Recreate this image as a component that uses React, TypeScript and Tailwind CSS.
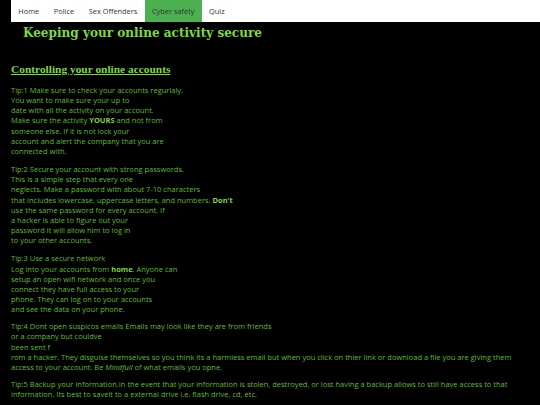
export default function App() {
  const navItems = ['Home', 'Police', 'Sex Offenders', 'Cyber safety', 'Quiz'];

  return (
    <div className="min-h-[405px] w-[540px] bg-black font-['Open_Sans',sans-serif] text-[7.5px] leading-[10.15px] text-[#5cbf2a]">
      {/* Nav */}
      <div className="pl-[11px]">
        <ul className="flex h-[22px] items-stretch bg-white text-[7.4px] text-[#333]">
          {navItems.map((item) => (
            <li
              key={item}
              className={`flex items-center px-[7.3px] ${item === 'Cyber safety' ? 'bg-[#4caf50]' : ''}`}
            >
              {item}
            </li>
          ))}
        </ul>
      </div>

      {/* Title */}
      <h1 className="pl-[23px] font-['DejaVu_Serif_Condensed','DejaVu_Serif',serif] text-[13.4px] font-bold leading-[20px] text-[#7ed93e]">
        Keeping your online activity secure
      </h1>

      <div className="px-[11px]">
        <h2 className="mt-[19px] font-['Liberation_Serif',serif] text-[11.4px] font-bold leading-[16px] text-[#7ed93e] underline">
          Controlling your online accounts
        </h2>

        <p className="mt-[8px]">
          Tip:1 Make sure to check your accounts regurlaly.
          <br />
          You want to make sure your up to
          <br />
          date with all the activity on your account.
          <br />
          Make sure the activity <b className="text-[#7ed93e]">YOURS</b> and not from
          <br />
          someone else. If it is not lock your
          <br />
          account and alert the company that you are
          <br />
          connected with.
        </p>

        <p className="mt-[8px]">
          Tip:2 Secure your account with strong passwords.
          <br />
          This is a simple step that every one
          <br />
          neglects. Make a password with about 7-10 characters
          <br />
          that includes lowercase, uppercase letters, and numbers. <b className="text-[#7ed93e]">Don't</b>
          <br />
          use the same password for every account. If
          <br />
          a hacker is able to figure out your
          <br />
          password it will allow him to log in
          <br />
          to your other accounts.
        </p>

        <p className="mt-[8px]">
          Tip:3 Use a secure network
          <br />
          Log into your accounts from <b className="text-[#7ed93e]">home</b>. Anyone can
          <br />
          setup an open wifi network and once you
          <br />
          connect they have full access to your
          <br />
          phone. They can log on to your accounts
          <br />
          and see the data on your phone.
        </p>

        <p className="mt-[7px]">
          Tip:4 Dont open suspicos emails Emails may look like they are from friends
          <br />
          or a company but couldve
          <br />
          been sent f
          <br />
          rom a hacker. They disguise themselves so you think its a harmless email but when you click on thier link or download a file you are giving them access to your account. Be <i>Mindfull</i> of what emails you opne.
        </p>

        <p className="mt-[7px]">
          Tip:5 Backup your information.In the event that your information is stolen, destroyed, or lost having a backup allows to still have access to that information. Its best to saveit to a external drive i.e. flash drive, cd, etc.
        </p>
      </div>
    </div>
  );
}
